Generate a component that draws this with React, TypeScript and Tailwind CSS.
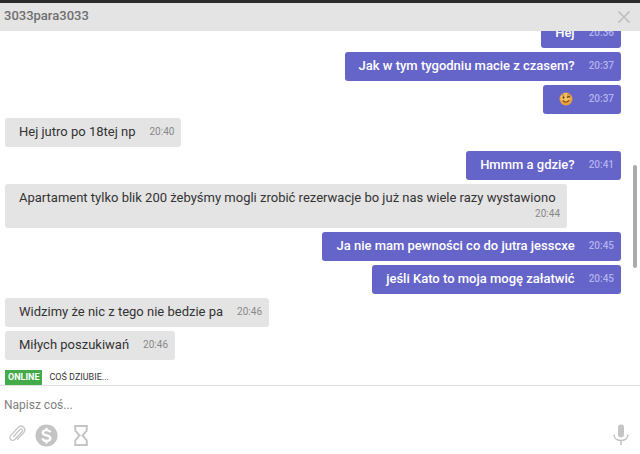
import { useState } from "react";

type Message = {
  text: string;
  time: string;
  mine?: boolean;
  long?: boolean;
};

const messages: Message[] = [
  { text: "Hej", time: "20:36", mine: true },
  { text: "Jak w tym tygodniu macie z czasem?", time: "20:37", mine: true },
  { text: ":wink:", time: "20:37", mine: true },
  { text: "Hej jutro po 18tej np", time: "20:40" },
  { text: "Hmmm a gdzie?", time: "20:41", mine: true },
  {
    text: "Apartament tylko blik 200 żebyśmy mogli zrobić rezerwacje bo już nas wiele razy wystawiono",
    time: "20:44",
    long: true,
  },
  { text: "Ja nie mam pewności co do jutra jesscxe", time: "20:45", mine: true },
  { text: "jeśli Kato to moja mogę załatwić", time: "20:45", mine: true },
  { text: "Widzimy że nic z tego nie bedzie pa", time: "20:46" },
  { text: "Miłych poszukiwań", time: "20:46" },
];

function Wink() {
  return (
    <svg viewBox="0 0 28 28" className="h-[14px] w-[14px]" role="img" aria-label="wink">
      <circle cx="14" cy="14" r="13" fill="#e9a03c" />
      <circle cx="13" cy="12" r="10" fill="#f8c25c" />
      <ellipse cx="9" cy="11" rx="1.8" ry="2.4" fill="#5d3a1c" />
      <path d="M16 11q3-3.5 6 0" fill="none" stroke="#5d3a1c" strokeWidth="2.4" />
      <path d="M6 6.5q2.5-2 5-.5M16 6q3-2 6 1" fill="none" stroke="#8a5423" strokeWidth="1.5" />
      <path d="M8 17.500q6 5.500 12-.5" fill="none" stroke="#8a4a22" strokeWidth="2.400" strokeLinecap="round" />
    </svg>
  );
}

function Bubble({ text, time, mine, long }: Message) {
  return (
    <li
      className={`flex max-w-[562px] shrink-0 flex-wrap items-center justify-end rounded-[3px] pl-[14px] pr-[7px] pt-1 ${
        long ? "pb-2" : "pb-[5px]"
      } ${mine ? "self-end bg-[#6564c9] font-medium text-white" : "self-start bg-[#e4e4e4] text-[#333]"}`}
    >
      <span className="mr-auto text-[13px] leading-5">
        {text === ":wink:" ? (
          <span className="flex h-5 items-center px-[2px]">
            <Wink />
          </span>
        ) : (
          text
        )}
      </span>
      <time className={`pl-[14px] text-[10px] leading-3 ${mine ? "text-[#b3b2ee]" : "text-[#888]"}`}>{time}</time>
    </li>
  );
}

export default function App() {
  const [draft, setDraft] = useState("");

  return (
    <div className="flex h-screen flex-col bg-white font-['Roboto','Open_Sans',sans-serif]">
      {/* Header */}
      <header className="flex h-[31px] shrink-0 items-center justify-between border-t-[3px] border-[#2d2b2b] bg-[#e4e4e4] pl-1 pr-[9px]">
        <h1 className="pb-[3px] text-[13px] font-medium leading-4 text-[#6f6f6f]">3033para3033</h1>
        <button aria-label="Zamknij" className="text-[#bdbdbd]">
          <svg viewBox="0 0 14 14" className="h-[14px] w-[14px]" fill="none" stroke="currentColor" strokeWidth="1.6">
            <path d="M1.500 1.500l11 11M12.500 1.500l-11 11" />
          </svg>
        </button>
      </header>

      {/* Messages */}
      <main className="relative min-h-0 flex-1 overflow-hidden">
        <ul className="flex h-full flex-col justify-end gap-1 pb-[10px] pl-[5px] pr-[19px]">
          {messages.map((message, i) => (
            <Bubble key={i} {...message} />
          ))}
        </ul>
        <div className="absolute right-[3px] top-[134px] h-[103px] w-1 rounded-full bg-[#aaa]" />
      </main>

      {/* Status */}
      <div className="flex h-4 shrink-0 items-center gap-[7px] border-b border-[#e0e0e0] pl-[5px]">
        <span className="bg-[#43ab4a] px-[3px] text-[9px] font-bold leading-[15px] text-white">ONLINE</span>
        <span className="text-[9px] leading-[15px] text-[#333]">COŚ DZIUBIE...</span>
      </div>

      {/* Composer */}
      <footer className="shrink-0">
        <input
          type="text"
          aria-label="Wiadomość"
          placeholder="Napisz coś..."
          value={draft}
          onChange={(e) => setDraft(e.target.value)}
          className="block h-[38px] w-full px-1 text-[12px] text-[#333] outline-none placeholder:text-[#808080]"
        />
        <div className="flex h-[30px] items-start pl-2 pr-[11px] text-[#c4c4c4]">
          <button aria-label="Dodaj załącznik">
            <svg viewBox="0 0 18 20" className="h-5 w-[18px]" fill="none" stroke="currentColor" strokeWidth="1.3" strokeLinecap="round">
              <path d="M5.500 12.500l6.500-7c1.500-1.500 3.600.5 2.200 2L7 15.200c-3 3-7-.8-4.200-3.800L10.200 3.400c3.400-3.600 9 1.300 5.500 5.200l-6.200 6.600" />
            </svg>
          </button>
          <button aria-label="Wyślij napiwek" className="ml-[9px]">
            <svg viewBox="0 0 24 24" className="h-[23px] w-[23px]">
              <circle cx="12" cy="12" r="11.500" fill="currentColor" />
              <path
                d="M16 8.600C15.400 7.200 14 6.500 12 6.500c-2.300 0-3.900 1-3.900 2.700C8.100 13 16 10.800 16 14.800c0 1.700-1.600 2.800-4 2.800-2.200 0-3.800-.9-4.200-2.600M12 3.800v3M12 17.300v3"
                fill="none"
                stroke="#fff"
                strokeWidth="2.300"
              />
            </svg>
          </button>
          <button aria-label="Znikająca wiadomość" className="ml-[15px]">
            <svg viewBox="0 0 16 24" className="h-[23px] w-4" fill="none" stroke="currentColor" strokeWidth="2">
              <path d="M2 2h12v5l-4.500 5 4.500 5v5H2v-5l4.500-5L2 7z" />
              <path d="M1 2h14M1 22h14" />
            </svg>
          </button>
          <button aria-label="Nagraj wiadomość" className="ml-auto">
            <svg viewBox="0 0 16 22" className="h-[22px] w-4" fill="none" stroke="currentColor" strokeWidth="1.6">
              <rect x="5" y="0.500" width="6" height="13" rx="3" fill="currentColor" stroke="none" />
              <path d="M1 10.500c0 8 14 8 14 0M8 16.500V21" />
            </svg>
          </button>
        </div>
      </footer>
    </div>
  );
}
